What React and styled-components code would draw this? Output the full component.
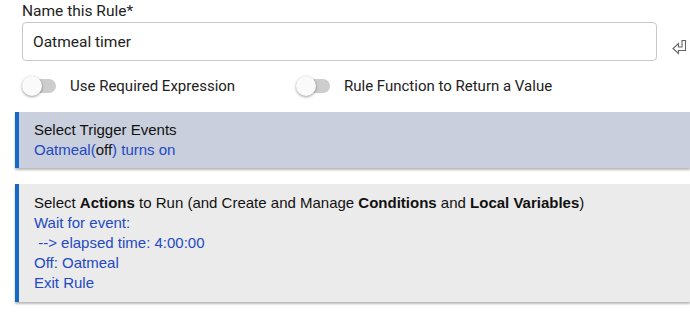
import React from "react";
import styled, { createGlobalStyle } from "styled-components";

const Global = createGlobalStyle`
  html, body {
    margin: 0;
    padding: 0;
    background: #fff;
    overflow: hidden;
  }
`;

const Page = styled.div`
  width: 690px;
  height: 317px;
  overflow: hidden;
  display: flex;
  flex-direction: column;
`;

const Form = styled.div`
  padding: 2px 0 0 22px;
  font-family: Roboto, "Liberation Sans", sans-serif;
  color: #222;
`;

const Label = styled.div`
  font-size: 15.5px;
  line-height: 18px;
  margin-bottom: 2px;
`;

const InputRow = styled.div`
  display: flex;
  align-items: center;
  gap: 14px;
`;

const Input = styled.div`
  box-sizing: border-box;
  width: 635px;
  height: 39px;
  border: 1px solid #c8c8c8;
  border-radius: 4px;
  padding: 0 10px;
  display: flex;
  align-items: center;
  font-size: 15.5px;
`;

const ToggleRow = styled.div`
  display: flex;
  align-items: center;
  height: 32px;
  margin-top: 9px;
`;

const ToggleItem = styled.div`
  display: flex;
  align-items: center;
  gap: 14px;
  width: ${(p) => p.$w}px;
  font-size: 15px;
`;

const Switch = styled.span`
  position: relative;
  width: 34px;
  height: 20px;
  display: inline-block;
  flex: none;

  &::before {
    content: "";
    position: absolute;
    left: 2px;
    top: 3px;
    width: 32px;
    height: 14px;
    border-radius: 7px;
    background: #cdcdcd;
  }

  &::after {
    content: "";
    position: absolute;
    left: 0;
    top: 0;
    width: 20px;
    height: 20px;
    border-radius: 50%;
    background: #fafafa;
    box-shadow: 0 1px 3px rgba(0, 0, 0, 0.4);
  }
`;

const Card = styled.div`
  margin: ${(p) => p.$mt}px 0 0 15px;
  background: ${(p) => p.$bg};
  border-left: 4px solid #1769c9;
  box-shadow: 0 2px 2px rgba(0, 0, 0, 0.28);
  padding: ${(p) => p.$py}px 0 ${(p) => p.$py}px 15px;
  font-family: "Liberation Sans", Arial, sans-serif;
  font-size: 15px;
  line-height: 20px;
  color: #111;
`;

const Link = styled.div`
  color: #2349c4;
  white-space: pre;
`;

const Dark = styled.span`
  color: #111;
`;

function ReturnIcon() {
  return (
    <svg width="17" height="17" viewBox="0 0 17 17" style={{ marginTop: 12 }}>
      <path
        d="M11 1.5 H14.5 V11.5 H7.5 V14.5 L2 9.5 L7.5 4.5 V8 H11 Z"
        fill="none"
        stroke="#666"
        strokeWidth="1.1"
        strokeLinejoin="miter"
      />
    </svg>
  );
}

export default function App() {
  return (
    <Page>
      <Global />
      <Form>
        <Label>Name this Rule*</Label>
        <InputRow>
          <Input>Oatmeal timer</Input>
          <ReturnIcon />
        </InputRow>
        <ToggleRow>
          <ToggleItem $w={274}>
            <Switch />
            Use Required Expression
          </ToggleItem>
          <ToggleItem $w={300}>
            <Switch />
            Rule Function to Return a Value
          </ToggleItem>
        </ToggleRow>
      </Form>

      <Card $mt={10} $bg="#c9cfdc" $py={8}>
        <div>Select Trigger Events</div>
        <Link>
          Oatmeal(<Dark>off</Dark>) turns on
        </Link>
      </Card>

      <Card $mt={16} $bg="#ebebeb" $py={9}>
        <div>
          Select <b>Actions</b> to Run (and Create and Manage <b>Conditions</b> and <b>Local Variables</b>)
        </div>
        <Link>Wait for event:</Link>
        <Link> --&gt; elapsed time: 4:00:00</Link>
        <Link>Off: Oatmeal</Link>
        <Link>Exit Rule</Link>
      </Card>
    </Page>
  );
}
